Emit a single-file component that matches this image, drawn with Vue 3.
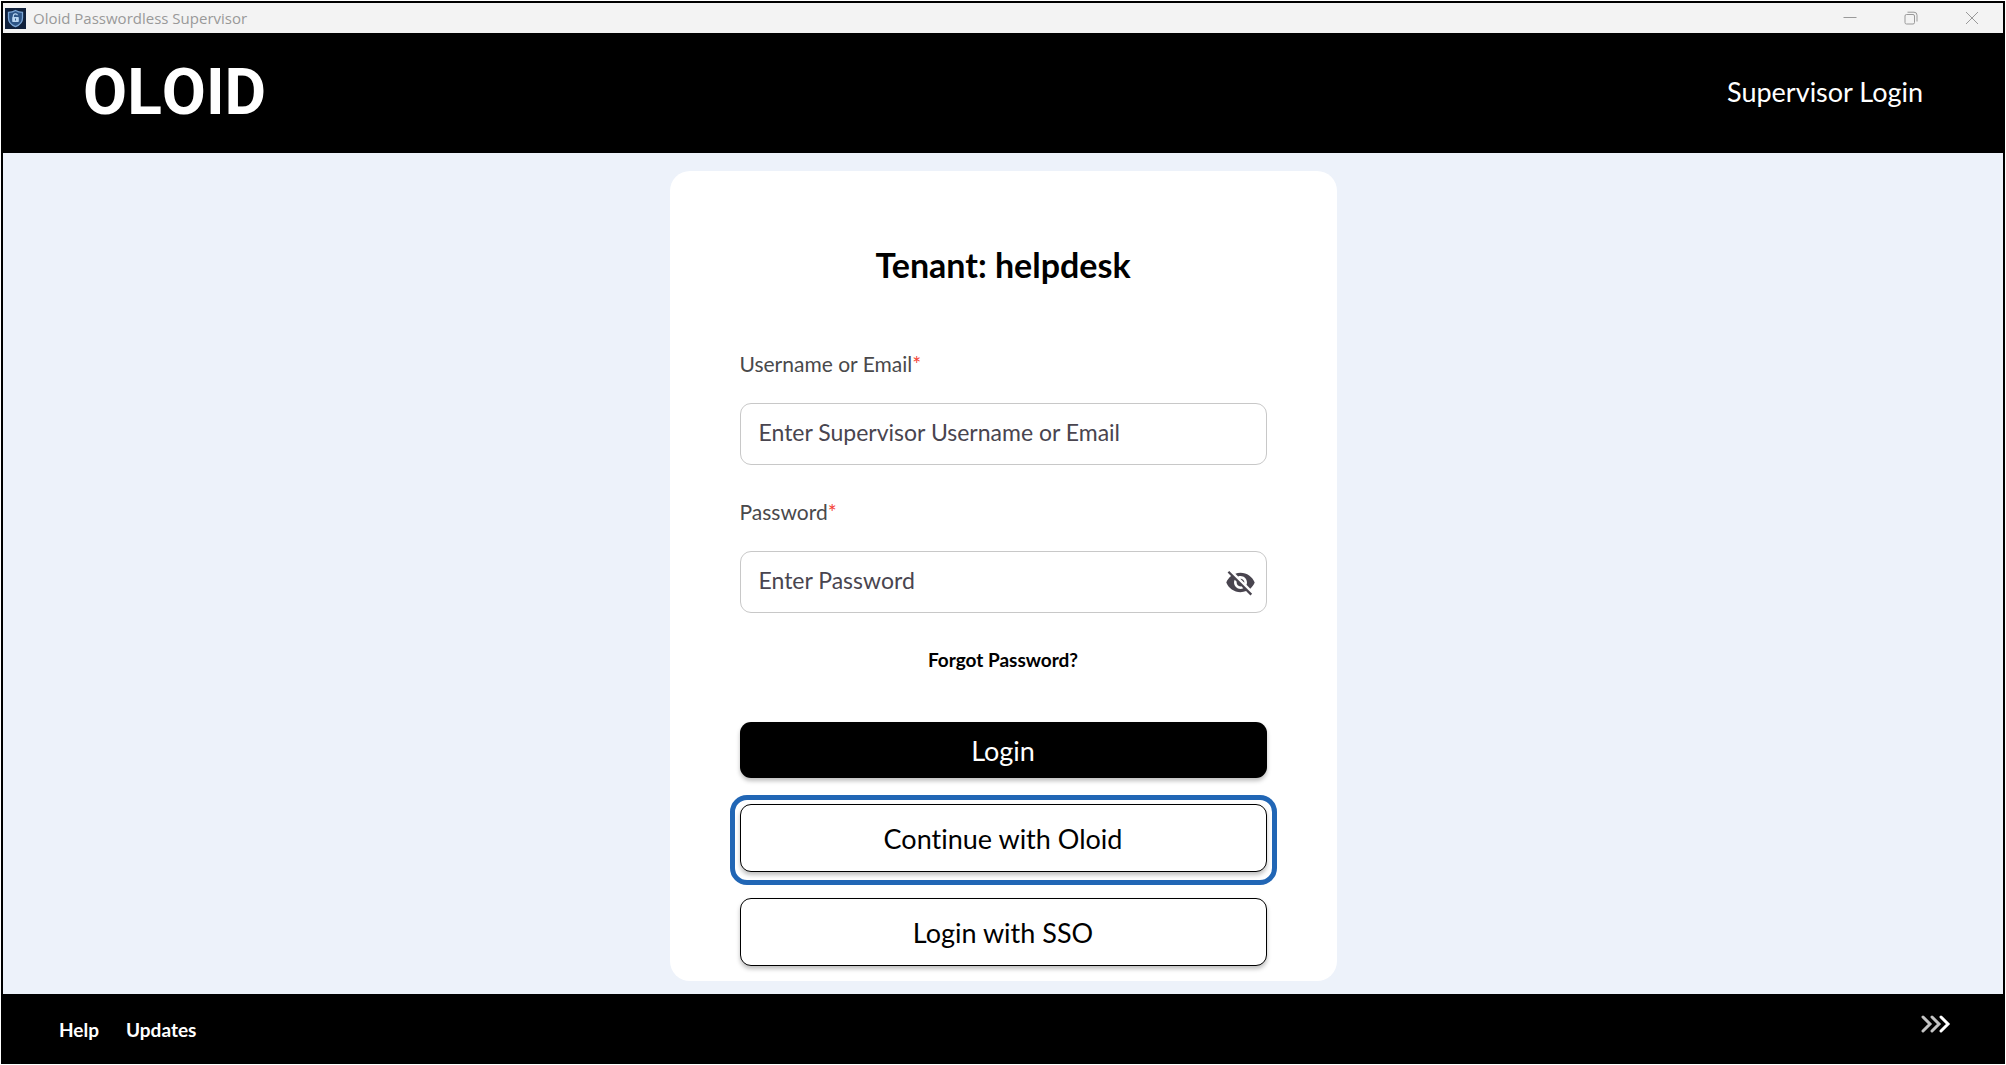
<template>
  <div class="window">
    <div class="title-bar">
      <svg class="app-icon" viewBox="0 0 21 21" aria-hidden="true">
        <rect width="21" height="21" fill="#10213c" />
        <path d="M10.5 2.5c2.2 1.3 4.500 1.800 7 1.900v5.600c0 4.200-2.800 7-7 8.600-4.200-1.600-7-4.400-7-8.600V4.400c2.500-.1 4.800-.6 7-1.900z" fill="#2d5587" stroke="#7ba6d6" stroke-width="1.300" />
        <path d="M8.300 9.500V8a2.200 2.200 0 0 1 4.200-.8" fill="none" stroke="#b9d6f2" stroke-width="1.200" />
        <rect x="7.200" y="9" width="6.600" height="5" rx="0.800" fill="#b9d6f2" />
        <rect x="10" y="10.500" width="1" height="2" fill="#2d5587" />
      </svg>
      <span class="app-title">Oloid Passwordless Supervisor</span>
      <div class="window-controls">
        <button type="button" aria-label="Minimize">
          <svg viewBox="0 0 14 14"><path d="M0.500 6.500h13" /></svg>
        </button>
        <button type="button" aria-label="Restore">
          <svg viewBox="0 0 14 14">
            <rect x="1" y="3.500" width="9.500" height="9.500" rx="1.500" />
            <path d="M3.500 1.200h6.500a3 3 0 0 1 3 3v6.300" />
          </svg>
        </button>
        <button type="button" aria-label="Close">
          <svg viewBox="0 0 14 14"><path d="M1 1l12 12M13 1L1 13" /></svg>
        </button>
      </div>
    </div>

    <header class="header">
      <div class="logo">OLOID</div>
      <div class="page-name">Supervisor Login</div>
    </header>

    <main class="content">
      <form class="card" @submit.prevent>
        <h1>Tenant: helpdesk</h1>

        <label for="username">Username or Email<span class="required">*</span></label>
        <div class="field">
          <input id="username" v-model="username" type="text" placeholder="Enter Supervisor Username or Email">
        </div>

        <label for="password">Password<span class="required">*</span></label>
        <div class="field">
          <input id="password" v-model="password" :type="showPassword ? 'text' : 'password'" placeholder="Enter Password">
          <button class="toggle" type="button" aria-label="Show password" @click="showPassword = !showPassword">
            <svg viewBox="0 0 24 24">
              <path d="M12 7c2.760 0 5 2.240 5 5 0 .65-.13 1.260-.36 1.830l2.920 2.920c1.510-1.260 2.700-2.890 3.430-4.750-1.730-4.390-6-7.500-11-7.500-1.400 0-2.740.25-3.980.7l2.160 2.160C10.740 7.130 11.350 7 12 7zM2 4.270l2.280 2.280.46.46C3.080 8.300 1.780 10.020 1 12c1.730 4.390 6 7.500 11 7.500 1.550 0 3.030-.3 4.380-.84l.42.42L19.730 22 21 20.730 3.270 3 2 4.270zM7.530 9.800l1.550 1.550c-.05.21-.08.43-.08.65 0 1.660 1.340 3 3 3 .22 0 .44-.03.65-.08l1.550 1.550c-.67.33-1.410.53-2.200.53-2.760 0-5-2.240-5-5 0-.79.2-1.530.53-2.200zm4.310-.78l3.150 3.150.02-.16c0-1.660-1.340-3-3-3l-.17.01z" />
            </svg>
          </button>
        </div>

        <a class="forgot" href="#">Forgot Password?</a>

        <div class="actions">
          <button class="btn btn-primary" type="submit">Login</button>
          <button class="btn btn-outline highlighted" type="button">Continue with Oloid</button>
          <button class="btn btn-outline" type="button">Login with SSO</button>
        </div>
      </form>
    </main>

    <footer class="footer">
      <nav>
        <a href="#">Help</a>
        <a href="#">Updates</a>
      </nav>
      <button class="more" type="button" aria-label="More">
        <svg viewBox="0 0 30 18">
          <path class="dim" d="M2 2l7 7-7 7" />
          <path class="dim" d="M11 2l7 7-7 7" />
          <path d="M20 2l7 7-7 7" />
        </svg>
      </button>
    </footer>
  </div>
</template>

<script setup>
import { ref } from 'vue'

const username = ref('')
const password = ref('')
const showPassword = ref(false)
</script>

<style>
body {
  background: #fff;
}
</style>

<style scoped>
.window {
  box-sizing: border-box;
  display: flex;
  flex-direction: column;
  min-height: calc(100vh - 2px);
  margin: 1px;
  border: 2px solid #000;
  background: #edf2fa;
  color: #000;
  font-family: Lato, "Liberation Sans", sans-serif;
  font-variant-ligatures: none;
}

button {
  border: 0;
  padding: 0;
  background: none;
  font-family: inherit;
  font-variant-ligatures: inherit;
  cursor: pointer;
}

a {
  color: inherit;
  text-decoration: none;
}

.title-bar {
  display: flex;
  align-items: center;
  height: 30px;
  padding: 0 24px 0 2px;
  background: #f3f3f3;
}

.app-icon {
  width: 21px;
  height: 21px;
}

.app-title {
  margin-left: 7px;
  color: #999;
  font-family: "Open Sans", sans-serif;
  font-size: 15px;
}

.window-controls {
  display: flex;
  gap: 47px;
  margin-left: auto;
}

.window-controls button {
  display: flex;
}

.window-controls svg {
  width: 14px;
  height: 14px;
  fill: none;
  stroke: #999;
}

.header {
  display: flex;
  align-items: center;
  justify-content: space-between;
  height: 120px;
  box-sizing: border-box;
  padding: 0 80px 4px;
  background: #000;
  color: #fff;
}

.logo {
  padding-top: 3px;
  font-family: Roboto, sans-serif;
  font-size: 64px;
  font-weight: 700;
  font-kerning: none;
  line-height: 64px;
}

.page-name {
  font-size: 27px;
}

.content {
  flex: 1;
  padding: 18px 20px 13px;
}

.card {
  box-sizing: border-box;
  display: flex;
  flex-direction: column;
  max-width: 667px;
  margin: 0 auto;
  padding: 74px 70px 15px;
  border-radius: 20px;
  background: #fff;
}

h1 {
  margin: 0 0 67px;
  font-size: 34px;
  font-weight: 700;
  line-height: 40px;
  text-align: center;
}

label {
  margin-bottom: 27px;
  color: #49494b;
  font-size: 21px;
  line-height: 24px;
}

.required {
  color: #f44336;
}

.field {
  box-sizing: border-box;
  display: flex;
  align-items: center;
  height: 62px;
  margin-bottom: 35px;
  padding: 0 10px 0 18px;
  border: 1px solid #c8c8c8;
  border-radius: 11px;
}

.field input {
  flex: 1;
  min-width: 0;
  padding: 0 0 4px;
  border: 0;
  outline: 0;
  background: none;
  font-family: inherit;
  font-size: 23px;
}

.field input::placeholder {
  color: #49454f;
  opacity: 1;
}

.toggle {
  display: flex;
}

.toggle svg {
  width: 31px;
  height: 31px;
  fill: #49454f;
}

.forgot {
  align-self: center;
  font-size: 19px;
  font-weight: 700;
  line-height: 24px;
}

.actions {
  display: flex;
  flex-direction: column;
  gap: 26px;
  margin-top: 50px;
}

.btn {
  position: relative;
  height: 68px;
  border-radius: 11px;
  box-shadow: 0 3px 4px rgba(0, 0, 0, 0.25);
  font-size: 27px;
}

.btn-primary {
  height: 56px;
  background: #000;
  color: #fff;
}

.btn-outline {
  border: 1px solid #000;
  background: #fff;
  color: #000;
}

/* ring around the suggested sign-in option */
.highlighted::after {
  content: "";
  position: absolute;
  inset: -10px -11px -14px;
  border: 5px solid #2166b5;
  border-radius: 17px;
}

.footer {
  display: flex;
  align-items: center;
  justify-content: space-between;
  height: 68px;
  padding: 0 52px 0 56px;
  background: #000;
  color: #fff;
}

.footer nav {
  display: flex;
  gap: 27px;
  padding-top: 3px;
  font-size: 19px;
  font-weight: 700;
}

.more {
  display: flex;
  padding-bottom: 8px;
}

.more svg {
  width: 30px;
  height: 18px;
  fill: none;
  stroke: #fff;
  stroke-width: 3;
  stroke-linecap: round;
}

.more .dim {
  stroke: #c4c4c4;
}
</style>
